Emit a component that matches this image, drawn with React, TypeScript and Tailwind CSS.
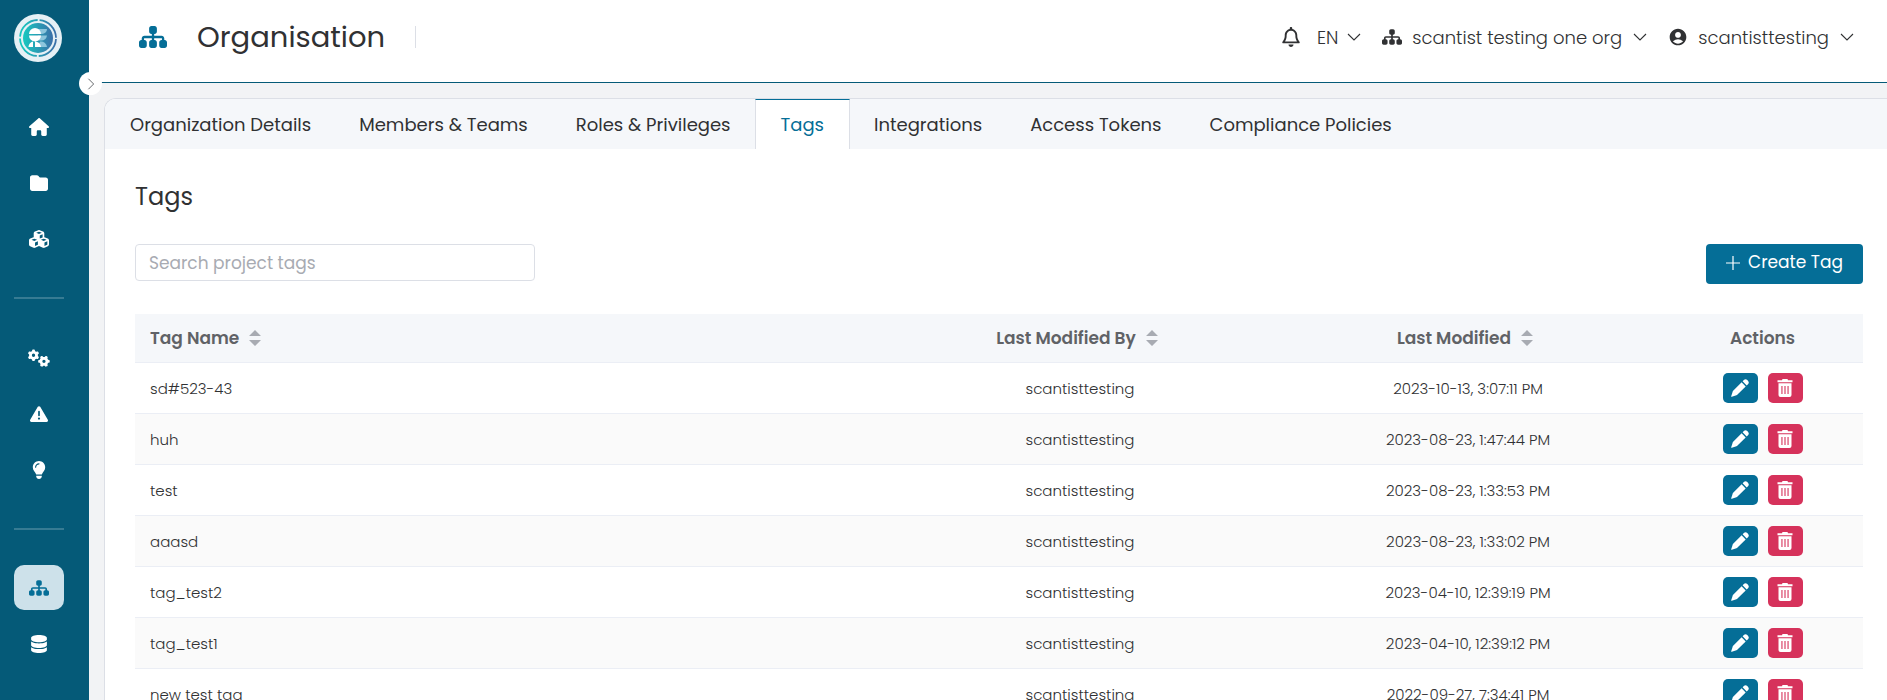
import React from "react";
import { FaHouse, FaFolder, FaCubes, FaGears, FaTriangleExclamation, FaLightbulb, FaSitemap, FaDatabase, FaRegBell } from "react-icons/fa6";
import { MdAccountCircle } from "react-icons/md";

type Tag = { name: string; by: string; modified: string };

const tags: Tag[] = [
  { name: "sd#523-43", by: "scantisttesting", modified: "2023-10-13, 3:07:11 PM" },
  { name: "huh", by: "scantisttesting", modified: "2023-08-23, 1:47:44 PM" },
  { name: "test", by: "scantisttesting", modified: "2023-08-23, 1:33:53 PM" },
  { name: "aaasd", by: "scantisttesting", modified: "2023-08-23, 1:33:02 PM" },
  { name: "tag_test2", by: "scantisttesting", modified: "2023-04-10, 12:39:19 PM" },
  { name: "tag_test1", by: "scantisttesting", modified: "2023-04-10, 12:39:12 PM" },
  { name: "new test tag", by: "scantisttesting", modified: "2022-09-27, 7:34:41 PM" },
];

const tabs = ["Organization Details", "Members & Teams", "Roles & Privileges", "Tags", "Integrations", "Access Tokens", "Compliance Policies"];

function Logo() {
  return (
    <svg viewBox="0 0 48 48" className="size-12" aria-hidden="true">
      <defs>
        <linearGradient id="ring" x1="0" x2="1">
          <stop offset="0" stopColor="#17c9c0" />
          <stop offset="1" stopColor="#3b6fa8" />
        </linearGradient>
      </defs>
      <circle cx="24" cy="24" r="24" fill="#e6f0f5" />
      <circle cx="24" cy="24" r="18" fill="none" stroke="url(#ring)" strokeWidth="1.8" strokeDasharray="26.3 2" strokeDashoffset="-1" />
      <circle cx="24" cy="24" r="15" fill="url(#ring)" />
      <path d="M21 15H33A5 5 0 0 1 28 20H21ZM24 21.500H33A6 6 0 0 1 27 26.500H21ZM26 27.500A6 6 0 0 1 33 33H24Z" fill="#8cc5dc" />
      <path d="M15 20A6 6 0 0 1 27 20ZM15 21.500H27A6 6 0 0 1 15 21.500ZM14.500 33A6 6 0 0 1 19 27.500V33ZM21 27.500A6 6 0 0 1 27 33H21Z" fill="#fff" />
    </svg>
  );
}

function Chevron({ className = "size-4" }: { className?: string }) {
  return (
    <svg viewBox="0 0 16 16" className={className} fill="none" stroke="currentColor" strokeWidth="1.1" aria-hidden="true">
      <path d="M2 5l6 6 6-6" />
    </svg>
  );
}

function PencilIcon() {
  return (
    <svg viewBox="0 0 18 18" className="size-[18px]" fill="currentColor" aria-hidden="true">
      <path d="M.2 17.200L1.700 12.600Q1.900 12 2.400 11.500L10.600 3.300L14.700 7.400L6.500 15.600Q6 16.100 5.400 16.300L.8 17.800Q0 18 .2 17.200Z" />
      <path d="M11.600 2.300L13.100.8Q14.700-.5 16.300 1.100L16.900 1.700Q18.500 3.300 17.200 4.900L15.700 6.400Z" />
    </svg>
  );
}

function TrashIcon() {
  return (
    <svg viewBox="0 0 16 18" className="h-[18px] w-4" fill="currentColor" aria-hidden="true">
      <path d="M5.500 0H10.500L11 1.300H15.500V3.300H.5V1.300H5Z" />
      <path fillRule="evenodd" d="M1.500 4.300H14.500V16Q14.500 18 12.500 18H3.500Q1.500 18 1.500 16ZM4.400 7V15H5.500V7ZM7.450 7V15H8.550V7ZM10.500 7V15H11.600V7Z" />
    </svg>
  );
}

function SortArrows() {
  return (
    <svg viewBox="0 0 12 16" className="h-4 w-3" fill="#a8abb2" aria-hidden="true">
      <path d="M6 0l6 6H0zM6 16l6-6H0z" />
    </svg>
  );
}

function NavLink({ label, active, children }: { label: string; active?: boolean; children: React.ReactNode }) {
  return (
    <a href="#" aria-label={label} className={`flex h-[45px] w-[50px] items-center justify-center rounded-[10px] ${active ? "bg-[#cde1ea] text-[#056e97]" : "text-white"}`}>
      {children}
    </a>
  );
}

function SortHeader({ label }: { label: string }) {
  return (
    <button type="button" className="inline-flex items-center gap-2.5 pr-1.5">
      {label}
      <SortArrows />
    </button>
  );
}

export default function App() {
  return (
    <div className="flex h-screen overflow-hidden bg-[#f2f3f5] font-['Poppins','Inter',sans-serif] text-[#303133]">
      <aside className="relative flex w-[89px] shrink-0 flex-col bg-[#055a78] pt-3.5 pl-3.5">
        <Logo />
        <nav className="mt-[42px] flex w-[50px] flex-col gap-[11px]">
          <NavLink label="Home"><FaHouse className="size-5" /></NavLink>
          <NavLink label="Projects"><FaFolder className="size-[18px]" /></NavLink>
          <NavLink label="Components"><FaCubes className="size-5" /></NavLink>
          <hr className="my-[25px] border-t-2 border-[#377b93]" />
          <NavLink label="Policies"><FaGears className="size-[22px]" /></NavLink>
          <NavLink label="Vulnerabilities"><FaTriangleExclamation className="size-[18px]" /></NavLink>
          <NavLink label="Insights"><FaLightbulb className="size-[18px]" /></NavLink>
          <hr className="mt-[25px] mb-6 border-t-2 border-[#377b93]" />
          <NavLink label="Organisation" active><FaSitemap className="size-5" /></NavLink>
          <NavLink label="Database"><FaDatabase className="size-[18px]" /></NavLink>
        </nav>
        <button type="button" aria-label="Expand menu" className="absolute top-[72px] -right-[13px] flex size-[23px] items-center justify-center rounded-full bg-white text-[#606266]">
          <Chevron className="size-3.5 -rotate-90" />
        </button>
      </aside>

      <div className="flex min-w-0 flex-1 flex-col">
        <header className="flex h-[83px] shrink-0 items-center border-b border-[#055a78] bg-white pr-8 pb-2 pl-[50px]">
          <FaSitemap className="size-7 text-[#056e97]" />
          <h1 className="ml-[30px] text-[29px] leading-10">Organisation</h1>
          <span className="ml-[30px] h-[22px] w-px bg-[#dcdfe6]" />
          <div className="ml-auto flex items-center text-[18px] font-light">
            <button type="button" aria-label="Notifications"><FaRegBell className="size-5" /></button>
            <button type="button" className="ml-4 flex items-center gap-2">EN <Chevron /></button>
            <button type="button" className="ml-5 flex items-center gap-2.5"><FaSitemap className="size-5" />scantist testing one org <Chevron /></button>
            <button type="button" className="ml-5 flex items-center gap-2.5"><MdAccountCircle className="size-5" />scantisttesting <Chevron /></button>
          </div>
        </header>

        <main className="mt-[15px] ml-[15px] min-h-0 flex-1 overflow-hidden rounded-tl-xl border-t border-l border-[#dcdfe6] bg-white">
          <nav className="flex h-[50px] bg-[#f5f7fa] pl-px text-[18px]">
            {tabs.map((tab) =>
              tab === "Tags" ? (
                <a key={tab} href="#" aria-current="page" className="flex items-center border-x border-t border-x-[#dcdfe6] border-t-[#056e97] bg-white px-[25px] text-[#056e97]">{tab}</a>
              ) : (
                <a key={tab} href="#" className="flex items-center px-6">{tab}</a>
              ),
            )}
          </nav>
          <section className="pr-6 pl-[30px]">
            <h2 className="pt-8 text-2xl leading-8">Tags</h2>
            <div className="mt-[31px] flex items-start justify-between">
              <input type="text" aria-label="Search project tags" placeholder="Search project tags" className="h-[37px] w-[400px] rounded border border-[#dcdfe6] px-[13px] text-[17px] placeholder:text-[#a8abb2]" />
              <button type="button" className="flex h-10 items-center gap-2 rounded bg-[#056e97] px-5 pb-0.5 text-[17px] text-white">
                <svg viewBox="0 0 14 14" className="size-3.5" stroke="currentColor" strokeWidth="1.2" aria-hidden="true"><path d="M7 0v14M0 7h14" /></svg>
                Create Tag
              </button>
            </div>
            <table className="mt-[30px] w-full table-fixed text-[15px] font-light">
              <colgroup>
                <col />
                <col className="w-[388px]" />
                <col className="w-[388px]" />
                <col className="w-[201px]" />
              </colgroup>
              <thead>
                <tr className="h-12 border-b border-[#ebeef5] bg-[#f5f7fa] text-[17px] text-[#606266]">
                  <th className="pt-px pl-[15px] text-left font-semibold"><SortHeader label="Tag Name" /></th>
                  <th className="pt-px text-center font-semibold"><SortHeader label="Last Modified By" /></th>
                  <th className="pt-px text-center font-semibold"><SortHeader label="Last Modified" /></th>
                  <th className="pt-px text-center font-semibold">Actions</th>
                </tr>
              </thead>
              <tbody>
                {tags.map((tag) => (
                  <tr key={tag.name} className="h-[51px] border-b border-[#ebeef5] even:bg-[#fafafa]">
                    <td className="pt-1 pl-[15px]">{tag.name}</td>
                    <td className="pt-1 text-center">{tag.by}</td>
                    <td className="pt-1 text-center">{tag.modified}</td>
                    <td>
                      <div className="flex justify-center gap-2.5 text-white">
                        <button type="button" aria-label={`Edit ${tag.name}`} className="flex h-[30px] w-[35px] items-center justify-center rounded-[5px] bg-[#056e97]"><PencilIcon /></button>
                        <button type="button" aria-label={`Delete ${tag.name}`} className="flex h-[30px] w-[35px] items-center justify-center rounded-[5px] bg-[#d6325b]"><TrashIcon /></button>
                      </div>
                    </td>
                  </tr>
                ))}
              </tbody>
            </table>
          </section>
        </main>
      </div>
    </div>
  );
}
